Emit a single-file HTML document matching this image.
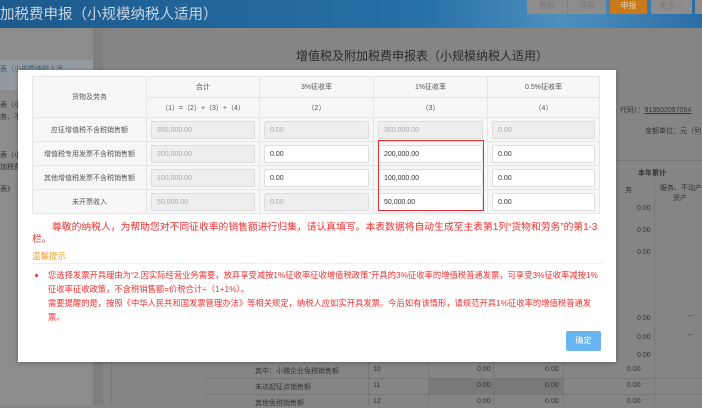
<!DOCTYPE html>
<html><head><meta charset="utf-8"><style>
*{margin:0;padding:0;box-sizing:border-box}
body{width:702px;height:405px;overflow:hidden;background:#858585;font-family:"Liberation Sans","Noto Sans CJK SC",sans-serif;position:relative}
.hdr{position:absolute;left:0;top:0;width:702px;height:28px;background:linear-gradient(90deg,#1d5a8c,#2670a8 60%,#4d8fbf 80%,#2a6ea6);}
.hdr .t{position:absolute;left:0;top:3px;color:#c9d6e2;font-size:14.5px}
.btn{position:absolute;top:0;height:14px;font-size:8px;color:#777;text-align:center;line-height:12px;background:#8d8d8d}
.side{position:absolute;left:0;top:28px;width:93px;height:377px;background:#8c8c8c}
.gap{position:absolute;left:93px;top:28px;width:10px;height:377px;background:#7e7e7e}
.pt{position:absolute;left:296px;top:47px;font-size:12px;color:#2b2b2b}
.bg{position:absolute;font-size:7px;color:#333}
.modal{position:absolute;left:18px;top:70px;width:598px;height:292px;background:#fff;box-shadow:0 1px 4px rgba(0,0,0,.3)}
table{position:absolute;left:14px;top:6px;border-collapse:collapse;width:568px;font-size:7px;color:#555}
td{border:1px solid #e6e6e6;background:#f7f7f7;text-align:center;padding:0}
.in{margin:0 4px;height:18px;border:1px solid #ddd;border-radius:2px;text-align:left;padding-left:5px;line-height:17px;font-size:7px}
.dis{background:#eee;color:#aaa}
.en{background:#fff;color:#333}
.red{position:absolute;left:360px;top:70px;width:106px;height:71px;border:1.5px solid #e0303a}
.msg{position:absolute;left:14px;top:152px;width:580px;color:#f03030;font-size:9.8px;line-height:12px;text-indent:20px;white-space:nowrap}
.tip{position:absolute;left:14px;top:180px;color:#f29a1e;font-size:8.5px}
.sep{position:absolute;left:14px;top:193px;width:570px;height:1px;background:#eee}
.b{position:absolute;left:30px;top:198px;width:556px;color:#f03030;font-size:8.3px;line-height:14px}
.dot{position:absolute;left:17px;top:204px;width:3px;height:3px;border-radius:50%;background:#e03030}
.ok{position:absolute;left:548px;top:261px;width:35px;height:20px;background:#6ab4ef;color:#fff;font-size:8px;text-align:center;line-height:20px;border-radius:2px}
</style></head><body>
<div class="hdr"><div class="t">加税费申报（小规模纳税人适用）</div>
<div class="btn" style="left:527px;width:40px">暂存</div>
<div class="btn" style="left:568px;width:38px">保存</div>
<div class="btn" style="left:610px;width:37px;background:#c87a1a;color:#e8d3b6">申报</div>
<div class="btn" style="left:651px;width:41px">更多▽</div>
<div class="btn" style="left:695px;width:7px"></div>
</div>
<div class="side"></div><div class="gap"></div>
<div style="position:absolute;left:0;top:60px;width:93px;height:30px;background:#929aa0"></div>
<div class="bg" style="left:0;top:64px;color:#3d5e7a">表（小规模纳税人适</div>
<div class="bg" style="left:0;top:100px">表（小</div><div class="bg" style="left:0;top:112px">务、不</div>
<div class="bg" style="left:0;top:150px">表（小</div><div class="bg" style="left:0;top:162px">加税费</div>
<div class="bg" style="left:0;top:184px">表》</div>
<div class="pt">增值税及附加税费申报表（小规模纳税人适用）</div>
<div class="bg" style="left:620px;top:105px">代码）：<u>913502057054</u></div>
<div class="bg" style="left:645px;top:126px">金额单位：元（列</div>
<div style="position:absolute;left:616px;top:160px;width:86px;height:245px;border-top:1px solid #777"></div>
<div class="bg" style="left:638px;top:168px;font-weight:bold">本年累计</div>
<div class="bg" style="left:625px;top:185px">务</div><div class="bg" style="left:660px;top:183px">服务、不动产</div><div class="bg" style="left:673px;top:193px">资产</div>
<div style="position:absolute;left:654px;top:178px;width:1px;height:227px;background:#777"></div>
<div class="bg" style="left:637px;top:205px">0.00</div><div class="bg" style="left:637px;top:227px">0.00</div><div class="bg" style="left:637px;top:249px">0.00</div>
<div class="bg" style="left:637px;top:315px">0.00</div><div class="bg" style="left:637px;top:334px">0.00</div><div class="bg" style="left:637px;top:352px">0.00</div>
<div class="bg" style="left:688px;top:313px">--</div><div class="bg" style="left:688px;top:332px">--</div>
<div style="position:absolute;left:111px;top:362px;width:591px;height:43px;border-left:1px solid #777"></div>
<div style="position:absolute;left:207px;top:378px;width:495px;height:1px;background:#777"></div>
<div style="position:absolute;left:207px;top:394px;width:495px;height:1px;background:#777"></div>
<div style="position:absolute;left:368px;top:362px;width:1px;height:43px;background:#777"></div>
<div style="position:absolute;left:428px;top:362px;width:1px;height:43px;background:#777"></div>
<div style="position:absolute;left:493px;top:362px;width:1px;height:43px;background:#777"></div>
<div style="position:absolute;left:563px;top:362px;width:1px;height:43px;background:#777"></div>
<div style="position:absolute;left:428px;top:379px;width:135px;height:15px;background:#7a7878"></div>
<div class="bg" style="left:255px;top:366px">其中：小微企业免税销售额</div><div class="bg" style="left:373px;top:366px">10</div>
<div class="bg" style="left:255px;top:382px">未达起征点销售额</div><div class="bg" style="left:373px;top:382px">11</div>
<div class="bg" style="left:255px;top:398px">其他免税销售额</div><div class="bg" style="left:373px;top:398px">12</div>
<div class="bg" style="left:477px;top:366px">0.00</div><div class="bg" style="left:545px;top:366px">0.00</div><div class="bg" style="left:627px;top:366px">0.00</div>
<div class="bg" style="left:477px;top:382px">0.00</div><div class="bg" style="left:545px;top:382px">0.00</div><div class="bg" style="left:627px;top:382px">0.00</div>
<div class="bg" style="left:477px;top:398px">0.00</div><div class="bg" style="left:545px;top:398px">0.00</div><div class="bg" style="left:627px;top:398px">0.00</div>

<div class="modal">
<table>
<tr style="height:21px"><td rowspan="2" style="width:114px">货物及劳务</td><td style="width:113px">合计</td><td style="width:114px">3%征收率</td><td style="width:114px">1%征收率</td><td>0.5%征收率</td></tr>
<tr style="height:20px"><td>（1）=（2）+（3）+（4）</td><td>（2）</td><td>（3）</td><td>（4）</td></tr>
<tr style="height:24px"><td>应征增值税不含税销售额</td><td><div class="in dis">350,000.00</div></td><td><div class="in dis">0.00</div></td><td><div class="in dis">350,000.00</div></td><td><div class="in dis">0.00</div></td></tr>
<tr style="height:24px"><td>增值税专用发票不含税销售额</td><td><div class="in dis">200,000.00</div></td><td><div class="in en">0.00</div></td><td><div class="in en">200,000.00</div></td><td><div class="in en">0.00</div></td></tr>
<tr style="height:24px"><td>其他增值税发票不含税销售额</td><td><div class="in dis">100,000.00</div></td><td><div class="in en">0.00</div></td><td><div class="in en">100,000.00</div></td><td><div class="in en">0.00</div></td></tr>
<tr style="height:24px"><td>未开票收入</td><td><div class="in dis">50,000.00</div></td><td><div class="in dis">0.00</div></td><td><div class="in en">50,000.00</div></td><td><div class="in en">0.00</div></td></tr>
</table>
<div class="red"></div>
<div class="msg">尊敬的纳税人，为帮助您对不同征收率的销售额进行归集，请认真填写。本表数据将自动生成至主表第1列“货物和劳务”的第1-3<br>栏。</div>
<div class="tip">温馨提示</div>
<div class="sep"></div>
<div class="dot"></div>
<div class="b">您选择发票开具理由为“2.因实际经营业务需要，放弃享受减按1%征收率征收增值税政策”开具的3%征收率的增值税普通发票，可享受3%征收率减按1%征收率征收政策，不含税销售额=价税合计÷（1+1%）。<br>需要提醒的是，按照《中华人民共和国发票管理办法》等相关规定，纳税人应如实开具发票。今后如有该情形，请规范开具1%征收率的增值税普通发票。</div>
<div class="ok">确定</div>
</div>
</body></html>
